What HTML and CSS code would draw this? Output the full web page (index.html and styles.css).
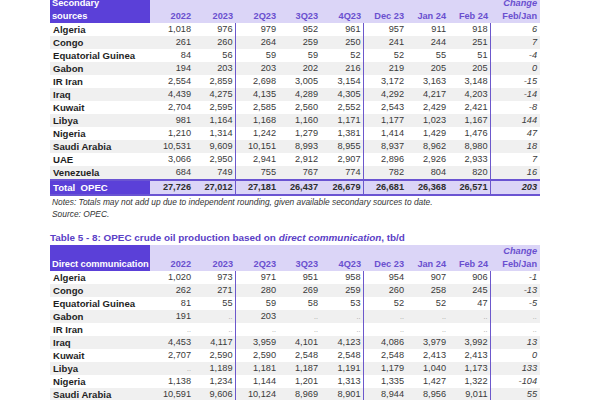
FILE: index.html
```html
<!DOCTYPE html>
<html>
<head>
<meta charset="utf-8">
<link rel="stylesheet" href="styles.css">
</head>
<body>
<div class="page">
  <table class="data first">
    <colgroup>
      <col class="c-label"><col class="c-num"><col class="c-num2"><col class="c-num"><col class="c-num2"><col class="c-num"><col class="c-num"><col class="c-num2"><col class="c-num2"><col class="c-chg">
    </colgroup>
    <thead>
      <tr>
        <th class="lab">Secondary<br>sources</th>
        <th>2022</th><th>2023</th><th>2Q23</th><th>3Q23</th><th>4Q23</th><th>Dec 23</th><th>Jan 24</th><th>Feb 24</th>
        <th class="chg"><i>Change</i><br>Feb/Jan</th>
      </tr>
    </thead>
    <tbody>
      <tr><td>Algeria</td><td>1,018</td><td class="sep">976</td><td>979</td><td>952</td><td class="sep">961</td><td>957</td><td>911</td><td class="sep">918</td><td class="chg">6</td></tr>
      <tr><td>Congo</td><td>261</td><td class="sep">260</td><td>264</td><td>259</td><td class="sep">250</td><td>241</td><td>244</td><td class="sep">251</td><td class="chg">7</td></tr>
      <tr><td>Equatorial Guinea</td><td>84</td><td class="sep">56</td><td>59</td><td>59</td><td class="sep">52</td><td>52</td><td>55</td><td class="sep">51</td><td class="chg">-4</td></tr>
      <tr><td>Gabon</td><td>194</td><td class="sep">203</td><td>203</td><td>202</td><td class="sep">216</td><td>219</td><td>205</td><td class="sep">205</td><td class="chg">0</td></tr>
      <tr><td>IR Iran</td><td>2,554</td><td class="sep">2,859</td><td>2,698</td><td>3,005</td><td class="sep">3,154</td><td>3,172</td><td>3,163</td><td class="sep">3,148</td><td class="chg">-15</td></tr>
      <tr><td>Iraq</td><td>4,439</td><td class="sep">4,275</td><td>4,135</td><td>4,289</td><td class="sep">4,305</td><td>4,292</td><td>4,217</td><td class="sep">4,203</td><td class="chg">-14</td></tr>
      <tr><td>Kuwait</td><td>2,704</td><td class="sep">2,595</td><td>2,585</td><td>2,560</td><td class="sep">2,552</td><td>2,543</td><td>2,429</td><td class="sep">2,421</td><td class="chg">-8</td></tr>
      <tr><td>Libya</td><td>981</td><td class="sep">1,164</td><td>1,168</td><td>1,160</td><td class="sep">1,171</td><td>1,177</td><td>1,023</td><td class="sep">1,167</td><td class="chg">144</td></tr>
      <tr><td>Nigeria</td><td>1,210</td><td class="sep">1,314</td><td>1,242</td><td>1,279</td><td class="sep">1,381</td><td>1,414</td><td>1,429</td><td class="sep">1,476</td><td class="chg">47</td></tr>
      <tr><td>Saudi Arabia</td><td>10,531</td><td class="sep">9,609</td><td>10,151</td><td>8,993</td><td class="sep">8,955</td><td>8,937</td><td>8,962</td><td class="sep">8,980</td><td class="chg">18</td></tr>
      <tr><td>UAE</td><td>3,066</td><td class="sep">2,950</td><td>2,941</td><td>2,912</td><td class="sep">2,907</td><td>2,896</td><td>2,926</td><td class="sep">2,933</td><td class="chg">7</td></tr>
      <tr><td>Venezuela</td><td>684</td><td class="sep">749</td><td>755</td><td>767</td><td class="sep">774</td><td>782</td><td>804</td><td class="sep">820</td><td class="chg">16</td></tr>
      <tr class="total"><td>Total&nbsp; OPEC</td><td>27,726</td><td class="sep">27,012</td><td>27,181</td><td>26,437</td><td class="sep">26,679</td><td>26,681</td><td>26,368</td><td class="sep">26,571</td><td class="chg">203</td></tr>
    </tbody>
  </table>
  <p class="note">Notes: Totals may not add up due to independent rounding, given available secondary sources to date.</p>
  <p class="note">Source: OPEC.</p>

  <h2 class="title">Table 5 - 8: OPEC crude oil production based on <i>direct communication</i>, tb/d</h2>
  <table class="data">
    <colgroup>
      <col class="c-label"><col class="c-num"><col class="c-num2"><col class="c-num"><col class="c-num2"><col class="c-num"><col class="c-num"><col class="c-num2"><col class="c-num2"><col class="c-chg">
    </colgroup>
    <thead>
      <tr>
        <th class="lab">Direct communication</th>
        <th>2022</th><th>2023</th><th>2Q23</th><th>3Q23</th><th>4Q23</th><th>Dec 23</th><th>Jan 24</th><th>Feb 24</th>
        <th class="chg"><i>Change</i><br>Feb/Jan</th>
      </tr>
    </thead>
    <tbody>
      <tr><td>Algeria</td><td>1,020</td><td class="sep">973</td><td>971</td><td>951</td><td class="sep">958</td><td>954</td><td>907</td><td class="sep">906</td><td class="chg">-1</td></tr>
      <tr><td>Congo</td><td>262</td><td class="sep">271</td><td>280</td><td>269</td><td class="sep">259</td><td>260</td><td>258</td><td class="sep">245</td><td class="chg">-13</td></tr>
      <tr><td>Equatorial Guinea</td><td>81</td><td class="sep">55</td><td>59</td><td>58</td><td class="sep">53</td><td>52</td><td>52</td><td class="sep">47</td><td class="chg">-5</td></tr>
      <tr><td>Gabon</td><td>191</td><td class="sep na">..</td><td>203</td><td class="na">..</td><td class="sep na">..</td><td class="na">..</td><td class="na">..</td><td class="sep na">..</td><td class="chg na">..</td></tr>
      <tr><td>IR Iran</td><td class="na">..</td><td class="sep na">..</td><td class="na">..</td><td class="na">..</td><td class="sep na">..</td><td class="na">..</td><td class="na">..</td><td class="sep na">..</td><td class="chg na">..</td></tr>
      <tr><td>Iraq</td><td>4,453</td><td class="sep">4,117</td><td>3,959</td><td>4,101</td><td class="sep">4,123</td><td>4,086</td><td>3,979</td><td class="sep">3,992</td><td class="chg">13</td></tr>
      <tr><td>Kuwait</td><td>2,707</td><td class="sep">2,590</td><td>2,590</td><td>2,548</td><td class="sep">2,548</td><td>2,548</td><td>2,413</td><td class="sep">2,413</td><td class="chg">0</td></tr>
      <tr><td>Libya</td><td class="na">..</td><td class="sep">1,189</td><td>1,181</td><td>1,187</td><td class="sep">1,191</td><td>1,179</td><td>1,040</td><td class="sep">1,173</td><td class="chg">133</td></tr>
      <tr><td>Nigeria</td><td>1,138</td><td class="sep">1,234</td><td>1,144</td><td>1,201</td><td class="sep">1,313</td><td>1,335</td><td>1,427</td><td class="sep">1,322</td><td class="chg">-104</td></tr>
      <tr><td>Saudi Arabia</td><td>10,591</td><td class="sep">9,606</td><td>10,124</td><td>8,969</td><td class="sep">8,901</td><td>8,944</td><td>8,956</td><td class="sep">9,011</td><td class="chg">55</td></tr>
    </tbody>
  </table>
</div>
</body>
</html>
```

FILE: styles.css
```css
html, body {
  margin: 0;
  padding: 0;
  background: #ffffff;
}

body {
  font-family: "Liberation Sans", Arial, sans-serif;
  color: #333333;
  overflow: hidden;
}

.page {
  padding-left: 50px;
  width: 490px;
}

.data {
  width: 490px;
  table-layout: fixed;
  border-collapse: collapse;
  border-spacing: 0;
  font-size: 9.2px;
}

.data.first {
  margin-top: -3px;
}

.c-label { width: 100px; }
.c-num { width: 43px; }
.c-num2 { width: 42px; }
.c-chg { width: 50px; }

.data th {
  background: #dbd5f7;
  color: #6a50cf;
  font-weight: bold;
  text-align: right;
  vertical-align: bottom;
  padding: 0 2px 0 0;
  line-height: 13px;
  height: 26px;
  white-space: nowrap;
}

.data th.lab {
  background: #5b40d8;
  color: #ffffff;
  text-align: left;
  padding-left: 2px;
  font-size: 9.3px;
  letter-spacing: -0.05px;
  overflow: hidden;
}

.data td {
  height: 13px;
  line-height: 13px;
  padding: 0 2px 0 0;
  text-align: right;
  white-space: nowrap;
  color: #3a3a3a;
}

.data td:first-child {
  text-align: left;
  font-weight: bold;
  color: #1f1f1f;
  padding-left: 3px;
  font-size: 9.6px;
}

.data tbody tr:nth-child(even) td {
  background: #f0f0f0;
}

.data td.sep {
  border-right: 1.5px solid #6c58cc;
}

.data td.chg {
  font-style: italic;
  padding-right: 3px;
}

.data th.chg {
  padding-right: 3px;
}

.data td.na {
  color: #9a9a9a;
  font-size: 7px;
}

.data tr.total td {
  background: #dbd5f7;
  font-weight: bold;
  color: #2e2e2e;
  border-top: 2px solid #6a54d2;
  border-bottom: 2px solid #6a54d2;
}

.data tr.total td:first-child {
  background: #5b40d8;
  color: #ffffff;
}

.note {
  margin: 0;
  font-size: 8.4px;
  line-height: 12px;
  font-style: italic;
  color: #333333;
  padding-left: 2px;
}

.title {
  margin: 12px 0 1px 0;
  font-size: 9.9px;
  line-height: 12px;
  font-weight: bold;
  color: #5a40c6;
}
```
